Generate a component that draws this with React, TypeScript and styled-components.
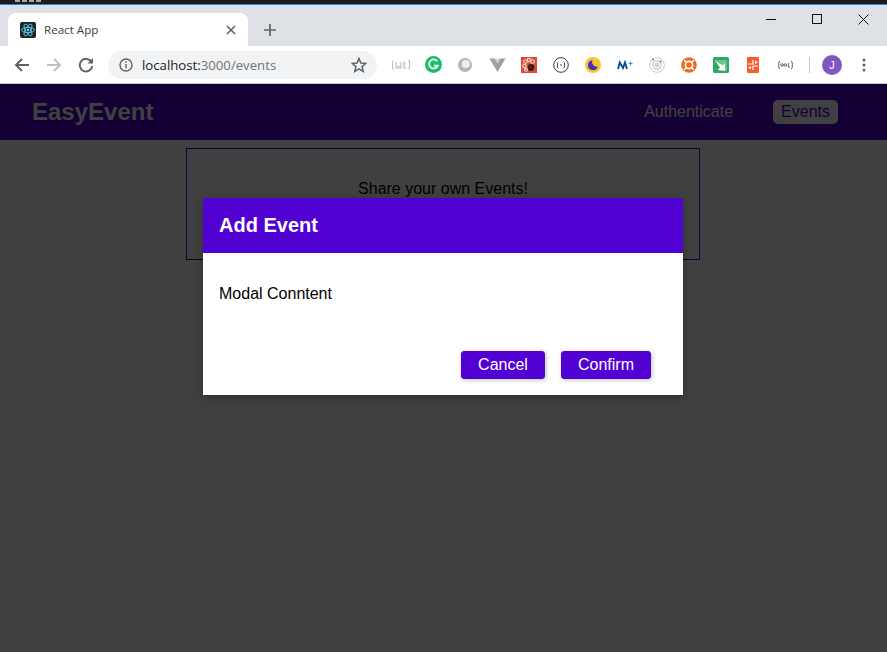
import React from 'react';
import styled, { createGlobalStyle } from 'styled-components';

const GlobalStyle = createGlobalStyle`
  html, body, #root {
    margin: 0;
    height: 100%;
  }
  body {
    font-family: "Liberation Sans", Arial, sans-serif;
    overflow: hidden;
  }
`;

const Shell = styled.div`
  display: flex;
  flex-direction: column;
  height: 652px;
  width: 887px;
`;

const TopStrip = styled.div`
  height: 4px;
  background: #1b1b1b;
  border-bottom: 1px solid #1a8fe0;
  padding-left: 15px;
`;

// the window behind the browser, only a sliver of it shows
const BehindMarks = styled.div`
  width: 28px;
  height: 2px;
  background: repeating-linear-gradient(90deg, #a8a8a8 0 5px, #1b1b1b 5px 7px);
`;

const TabStrip = styled.div`
  height: 41px;
  background: #dee1e6;
  display: flex;
  align-items: flex-end;
  padding-left: 8px;
`;

const Tab = styled.div`
  width: 240px;
  height: 33px;
  background: #fff;
  border-radius: 8px 8px 0 0;
  display: flex;
  align-items: center;
  padding: 0 12px;
  box-sizing: border-box;
  color: #3c4043;
  font-family: "Open Sans", sans-serif;
  font-size: 11.6px;
`;

const TabTitle = styled.span`
  margin-left: 8px;
  flex: 1;
`;

const NewTab = styled.div`
  width: 44px;
  height: 33px;
  display: flex;
  align-items: center;
  justify-content: center;
`;

const WindowControls = styled.div`
  margin-left: auto;
  margin-right: 1px;
  align-self: flex-start;
  display: flex;
`;

const WindowButton = styled.div`
  width: 46px;
  height: 28px;
  display: flex;
  align-items: center;
  justify-content: center;
`;

const Toolbar = styled.div`
  height: 38px;
  background: #fff;
  border-bottom: 1px solid #c8cacd;
  box-sizing: border-box;
  display: flex;
  align-items: center;
  padding-left: 6px;
`;

const NavIcon = styled.div`
  width: 32px;
  height: 28px;
  display: flex;
  align-items: center;
  justify-content: center;
`;

const Omnibox = styled.div`
  width: 269px;
  height: 28px;
  margin-left: 6px;
  margin-right: 8px;
  border-radius: 14px;
  background: #f1f3f4;
  display: flex;
  align-items: center;
  padding: 0 10px 0 11px;
  box-sizing: border-box;
  font-family: "Open Sans", sans-serif;
  font-size: 13.2px;
`;

const Host = styled.span`
  color: #202124;
  margin-left: 9px;
`;

const UrlRest = styled.span`
  color: #70757a;
  flex: 1;
`;

const ExtensionSlot = styled.div`
  width: 32px;
  height: 28px;
  display: flex;
  align-items: center;
  justify-content: center;
`;

const Divider = styled.div`
  width: 1px;
  height: 16px;
  background: #c8cacd;
  margin: 0 6px 0 8px;
`;

const Avatar = styled.div`
  width: 20px;
  height: 20px;
  margin: 0 6px;
  border-radius: 50%;
  background: #7e57c2;
  color: #fff;
  font-size: 11px;
  display: flex;
  align-items: center;
  justify-content: center;
`;

const Page = styled.div`
  position: relative;
  flex: 1;
  background: #fff;
`;

const MainNav = styled.header`
  height: 56px;
  background: #5101d1;
  display: flex;
  align-items: center;
  padding: 0 49px 0 32px;
`;

const Logo = styled.h1`
  margin: 0;
  font-size: 24px;
  font-weight: bold;
  color: #fff;
`;

const NavItems = styled.nav`
  margin-left: auto;
  display: flex;
  align-items: center;
  gap: 32px;
`;

const NavLink = styled.a<{ $active?: boolean }>`
  font-size: 16px;
  padding: 3px 8px;
  border-radius: 5px;
  background: ${(p) => (p.$active ? '#fff' : 'transparent')};
  color: ${(p) => (p.$active ? '#5101d1' : '#fff')};
`;

const EventsControl = styled.section`
  width: 514px;
  height: 112px;
  margin: 8px 0 0 186px;
  border: 1px solid #5101d1;
  text-align: center;
  padding-top: 31px;
  box-sizing: border-box;
  font-size: 16px;
  color: #000;
`;

const Backdrop = styled.div`
  position: absolute;
  inset: 0;
  background: rgba(0, 0, 0, 0.75);
`;

const Modal = styled.div`
  position: absolute;
  top: 114px;
  left: 203px;
  width: 480px;
  height: 197px;
  background: #fff;
  box-shadow: 0 2px 8px rgba(0, 0, 0, 0.26);
  display: flex;
  flex-direction: column;
`;

const ModalHeader = styled.header`
  height: 55px;
  background: #5101d1;
  color: #fff;
  font-size: 20px;
  font-weight: bold;
  display: flex;
  align-items: center;
  padding-left: 16px;
`;

const ModalContent = styled.div`
  flex: 1;
  padding: 32px 16px 0;
  font-size: 16px;
  color: #000;
`;

const ModalActions = styled.div`
  display: flex;
  justify-content: flex-end;
  gap: 16px;
  padding: 0 32px 16px 0;
`;

const ActionButton = styled.button<{ $w: number }>`
  width: ${(p) => p.$w}px;
  height: 28px;
  border: 1px solid #5101d1;
  border-radius: 3px;
  background: #5101d1;
  color: #fff;
  font: 16px "Liberation Sans", Arial, sans-serif;
  padding: 0;
  box-shadow: 1px 1px 5px rgba(0, 0, 0, 0.26);
`;

function ReactFavicon() {
  return (
    <svg width="16" height="16" viewBox="0 0 16 16">
      <rect width="16" height="16" rx="2" fill="#20232a" />
      <g fill="none" stroke="#61dafb" strokeWidth="0.8">
        <ellipse cx="8" cy="8" rx="6.5" ry="2.6" />
        <ellipse cx="8" cy="8" rx="6.5" ry="2.6" transform="rotate(60 8 8)" />
        <ellipse cx="8" cy="8" rx="6.5" ry="2.6" transform="rotate(120 8 8)" />
      </g>
      <circle cx="8" cy="8" r="1.3" fill="#61dafb" />
    </svg>
  );
}

const extensions = [
  <svg key="a" width="20" height="14" viewBox="0 0 20 14" fill="none" stroke="#c0c0c0" strokeWidth="1.2">
    <path d="M2.5 3 Q1 3 1.5 7 Q1 11 3 11 M17.5 2 Q19 3 18.5 7 Q19 11 17 11" />
    <path d="M5 4 V9 Q5 10.5 6.5 10 L7.5 8 L8.5 10 Q10 10.5 10 9 V4" />
    <path d="M13 3 V10 H15.5 M12 6 H15" />
  </svg>,
  <svg key="b" width="17" height="17" viewBox="0 0 16 16">
    <circle cx="8" cy="8" r="8" fill="#15c26b" />
    <path d="M11.5 5 A4.2 4.2 0 1 0 12 9 H8.5" fill="none" stroke="#fff" strokeWidth="1.7" />
  </svg>,
  <svg key="c" width="16" height="16" viewBox="0 0 16 16">
    <circle cx="8" cy="8" r="7" fill="#b6b6b6" />
    <circle cx="8.8" cy="7" r="4.1" fill="#eeeeee" />
  </svg>,
  <svg key="d" width="17" height="16" viewBox="0 0 16 16">
    <path d="M0 1.5 H5 L8 6.5 L11 1.5 H16 L8 15 Z" fill="#a0a0a0" />
    <path d="M5 1.5 H7 L8 3.5 L9 1.5 H11 L8 6.5 Z" fill="#c9c9c9" />
  </svg>,
  <svg key="e" width="16" height="16" viewBox="0 0 16 16">
    <rect width="16" height="16" fill="#dc4a38" />
    <g fill="none" stroke="#f8d8d2" strokeWidth="1.1">
      <circle cx="4.5" cy="4.5" r="1.8" />
      <circle cx="8" cy="3" r="1.6" />
      <circle cx="11.5" cy="4.5" r="1.8" />
      <circle cx="3.5" cy="9" r="1.7" />
      <circle cx="5" cy="12.8" r="1.4" />
    </g>
    <ellipse cx="10" cy="10.5" rx="3.2" ry="3.4" fill="#2a1a18" />
    <path d="M7 8 L13 13 M7 12 L12 7" stroke="#8c3a2c" strokeWidth="0.6" />
  </svg>,
  <svg key="f" width="16" height="16" viewBox="0 0 16 16" fill="none" stroke="#3a3a3a">
    <circle cx="8" cy="8" r="7.3" strokeWidth="1" />
    <path d="M5.3 5 Q4 5 4.5 8 Q4 11 5.3 11 M10.7 5 Q12 5 11.5 8 Q12 11 10.7 11 M7 8 H9" strokeWidth="0.9" />
  </svg>,
  <svg key="g" width="16" height="16" viewBox="0 0 16 16">
    <circle cx="8" cy="8" r="8" fill="#f7c531" />
    <path d="M7.5 3.2 A5 5 0 1 0 12.8 9.5 A4.6 4.6 0 0 1 7.5 3.2 Z" fill="#4a2fb8" />
  </svg>,
  <svg key="h" width="16" height="12" viewBox="0 0 16 12" fill="none">
    <path d="M1 10 L2.8 3.5 L6 9 L8 3.5 L10 10" stroke="#0b4f8f" strokeWidth="1.9" />
    <path d="M11.5 4.5 H15.5 M13.5 2.5 V6.5" stroke="#3a8fd0" strokeWidth="1.1" />
  </svg>,
  <svg key="i" width="16" height="16" viewBox="0 0 16 16" fill="none" stroke="#c9c9c9">
    <circle cx="8" cy="8" r="7.3" />
    <circle cx="8" cy="8" r="4.2" strokeWidth="1.2" />
    <circle cx="8" cy="8" r="2" fill="#d4d4d4" />
    <circle cx="4" cy="2.6" r="1.1" fill="#8d8d8d" stroke="none" />
    <circle cx="11.5" cy="4.5" r="1.1" fill="#8d8d8d" stroke="none" />
  </svg>,
  <svg key="j" width="16" height="16" viewBox="0 0 16 16">
    <circle cx="8" cy="8" r="7.8" fill="#f4691f" />
    <circle cx="8" cy="8" r="3.6" fill="none" stroke="#fff" strokeWidth="1.6" />
    <path d="M3.2 3.2 L5.8 5.8 M12.8 3.2 L10.2 5.8 M3.2 12.8 L5.8 10.2 M12.8 12.8 L10.2 10.2" stroke="#fff" strokeWidth="1.6" />
  </svg>,
  <svg key="k" width="16" height="16" viewBox="0 0 16 16">
    <rect width="16" height="16" rx="1.5" fill="#2fa866" />
    <path d="M3 3 H14 V14 L11 11 L3 3 Z" fill="#d6f0e1" opacity="0.35" />
    <path d="M1.5 3 L9.5 8.5 L11.5 6 L12.5 14 L4.5 13 L7 10.5 L1.5 3 Z" fill="#fff" />
  </svg>,
  <svg key="l" width="12" height="16" viewBox="0 0 12 16">
    <rect width="12" height="16" rx="1" fill="#f85c2b" />
    <path d="M6 3 V7 H1 M6 9 H11 M6 9 V13" stroke="#fff" strokeWidth="1.2" fill="none" />
    <path d="M8 3.5 L11 5.5 L8 7 Z M4 9 L1 10.5 L4 12.5 Z" fill="#fff" />
  </svg>,
  <svg key="m" width="17" height="10" viewBox="0 0 16 10" fill="none" stroke="#555" strokeWidth="0.9">
    <path d="M2.5 1 Q0.8 1 1.2 5 Q0.8 9 2.5 9 M13.5 1 Q15.2 1 14.8 5 Q15.2 9 13.5 9" />
    <circle cx="4.6" cy="5" r="1.3" />
    <circle cx="7.8" cy="5" r="1.3" />
    <path d="M10.8 3 V7 H12.6" />
  </svg>,
];

function App() {
  return (
    <Shell>
      <GlobalStyle />
      <TopStrip>
        <BehindMarks />
      </TopStrip>
      <TabStrip>
        <Tab>
          <ReactFavicon />
          <TabTitle>React App</TabTitle>
          <svg width="10" height="10" viewBox="0 0 10 10" stroke="#5f6368" strokeWidth="1.6">
            <path d="M1 1 L9 9 M9 1 L1 9" />
          </svg>
        </Tab>
        <NewTab>
          <svg width="12" height="12" viewBox="0 0 12 12" stroke="#5f6368" strokeWidth="1.7">
            <path d="M6 0 V12 M0 6 H12" />
          </svg>
        </NewTab>
        <WindowControls>
          <WindowButton>
            <svg width="10" height="10" viewBox="0 0 10 10" stroke="#111">
              <path d="M0 5.5 H10" />
            </svg>
          </WindowButton>
          <WindowButton>
            <svg width="10" height="10" viewBox="0 0 10 10" stroke="#111" fill="none">
              <rect x="0.5" y="0.5" width="9" height="9" />
            </svg>
          </WindowButton>
          <WindowButton>
            <svg width="11" height="11" viewBox="0 0 11 11" stroke="#111">
              <path d="M0.5 0.5 L10.5 10.5 M10.5 0.5 L0.5 10.5" />
            </svg>
          </WindowButton>
        </WindowControls>
      </TabStrip>
      <Toolbar>
        <NavIcon>
          <svg width="16" height="16" viewBox="0 0 16 16" fill="none" stroke="#5f6368" strokeWidth="2">
            <path d="M15 8 H2 M8 2 L2 8 L8 14" />
          </svg>
        </NavIcon>
        <NavIcon>
          <svg width="16" height="16" viewBox="0 0 16 16" fill="none" stroke="#bdc1c6" strokeWidth="2">
            <path d="M1 8 H14 M8 2 L14 8 L8 14" />
          </svg>
        </NavIcon>
        <NavIcon>
          <svg width="16" height="16" viewBox="0 0 16 16" fill="none" stroke="#5f6368" strokeWidth="2">
            <path d="M13.5 5 A6.3 6.3 0 1 0 14.3 9" />
            <path d="M15 1 V6.5 H9.5 Z" fill="#5f6368" stroke="none" />
          </svg>
        </NavIcon>
        <Omnibox>
          <svg width="14" height="14" viewBox="0 0 14 14" fill="none" stroke="#5f6368" strokeWidth="1.4">
            <circle cx="7" cy="7" r="6" />
            <path d="M7 6 V10.5 M7 3.3 V4.8" />
          </svg>
          <Host>localhost:</Host>
          <UrlRest>3000/events</UrlRest>
          <svg width="16" height="16" viewBox="0 0 16 16" fill="none" stroke="#5f6368" strokeWidth="1.5">
            <path d="M8 1.5 L9.9 6 L14.8 6.4 L11.1 9.6 L12.2 14.4 L8 11.9 L3.8 14.4 L4.9 9.6 L1.2 6.4 L6.1 6 Z" />
          </svg>
        </Omnibox>
        {extensions.map((icon) => (
          <ExtensionSlot key={icon.key}>{icon}</ExtensionSlot>
        ))}
        <Divider />
        <Avatar>J</Avatar>
        <NavIcon>
          <svg width="4" height="14" viewBox="0 0 4 14" fill="#5f6368">
            <circle cx="2" cy="2" r="1.5" />
            <circle cx="2" cy="7" r="1.5" />
            <circle cx="2" cy="12" r="1.5" />
          </svg>
        </NavIcon>
      </Toolbar>
      <Page>
        <MainNav>
          <Logo>EasyEvent</Logo>
          <NavItems>
            <NavLink>Authenticate</NavLink>
            <NavLink $active>Events</NavLink>
          </NavItems>
        </MainNav>
        <EventsControl>Share your own Events!</EventsControl>
        <Backdrop />
        <Modal>
          <ModalHeader>Add Event</ModalHeader>
          <ModalContent>Modal Conntent</ModalContent>
          <ModalActions>
            <ActionButton $w={84}>Cancel</ActionButton>
            <ActionButton $w={90}>Confirm</ActionButton>
          </ModalActions>
        </Modal>
      </Page>
    </Shell>
  );
}

export default App;
